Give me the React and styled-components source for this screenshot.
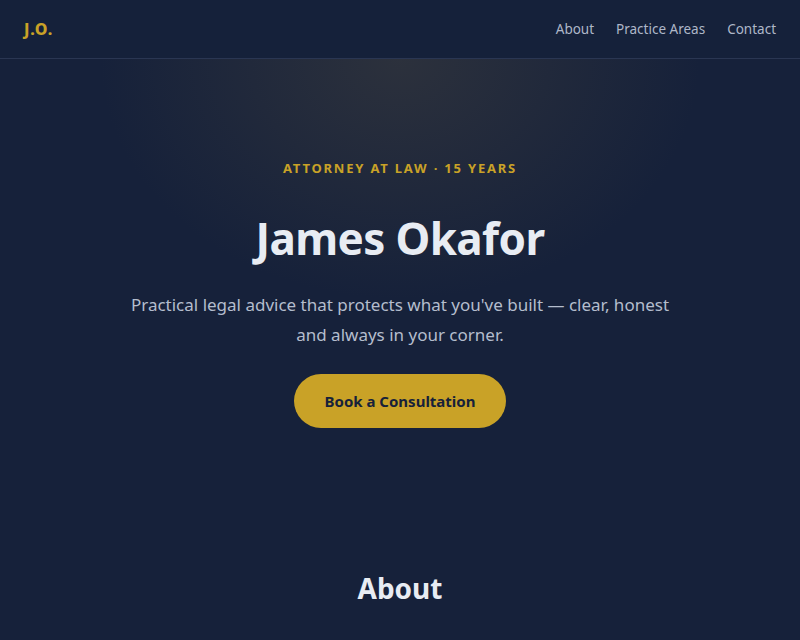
import * as React from "react"
import { styled, createGlobalStyle } from "styled-components"

const GlobalStyle = createGlobalStyle`
    * { box-sizing: border-box; }
    body {
        margin: 0;
        background: #16213a;
        font-family: "Noto Sans", "Open Sans", sans-serif;
        color: #e8ecf3;
    }
`

export default function App() {
    return (
        <>
            <GlobalStyle />
            <Header>
                <Logo>J.O.</Logo>
                <Nav>
                    <NavLink href="#about">About</NavLink>
                    <NavLink href="#practice">Practice Areas</NavLink>
                    <NavLink href="#contact">Contact</NavLink>
                </Nav>
            </Header>
            <Hero>
                <Eyebrow>Attorney at Law · 15 Years</Eyebrow>
                <Title>James Okafor</Title>
                <Lead>Practical legal advice that protects what you've built — clear, honest and always in your corner.</Lead>
                <Cta href="#contact">Book a Consultation</Cta>
            </Hero>
            <Section id="about">
                <SectionTitle>About</SectionTitle>
            </Section>
        </>
    )
}

const Header = styled.header`
    height: 59px;
    display: flex;
    align-items: center;
    justify-content: space-between;
    padding: 0 24px;
    border-bottom: 1px solid #2a3652;
    background: #15213a;
`

const Logo = styled.div`
    color: #c9a227;
    font-weight: 800;
    font-size: 16px;
    letter-spacing: 0.8px;
`

const Nav = styled.nav`
    display: flex;
    gap: 22px;
`

const NavLink = styled.a`
    text-decoration: none;
    color: #aeb7c8;
    font-size: 13.5px;
`

const Hero = styled.section`
    display: flex;
    flex-direction: column;
    align-items: center;
    text-align: center;
    padding: 100px 24px 0;
    height: 440px;
    background: radial-gradient(ellipse 300px 240px at 50% 0%, rgba(62, 62, 62, 0.55), rgba(22, 33, 58, 0) 100%);
`

const Eyebrow = styled.div`
    color: #c9a227;
    font-size: 13px;
    font-weight: 700;
    letter-spacing: 1.8px;
    text-transform: uppercase;
    line-height: 18px;
`

const Title = styled.h1`
    margin: 31px 0 0;
    font-size: 44px;
    font-weight: 700;
    line-height: 60px;
    color: #e8ecf3;
    letter-spacing: -0.6px;
`

const Lead = styled.p`
    margin: 22px 0 0;
    max-width: 560px;
    font-size: 17px;
    line-height: 30px;
    color: #b4bdcd;
`

const Cta = styled.a`
    margin-top: 24px;
    display: inline-flex;
    align-items: center;
    justify-content: center;
    width: 212px;
    height: 54px;
    border-radius: 27px;
    background: #c9a227;
    color: #16213a;
    font-weight: 700;
    font-size: 15px;
    text-decoration: none;
`

const Section = styled.section`
    display: flex;
    justify-content: center;
    padding-top: 72px;
`

const SectionTitle = styled.h2`
    margin: 0;
    font-size: 28px;
    font-weight: 700;
    line-height: 34px;
    color: #e8ecf3;
`
